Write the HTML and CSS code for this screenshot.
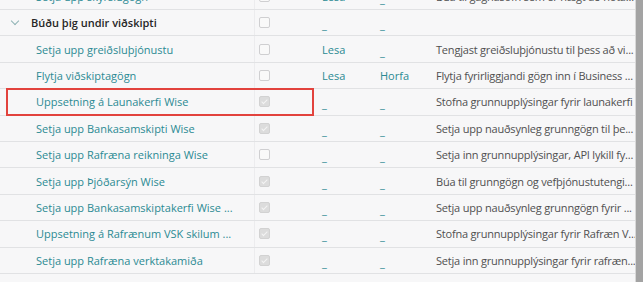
FILE: index.html
```html
<!DOCTYPE html>
<html lang="is">
<head>
  <meta charset="UTF-8" />
  <title>Uppsetning</title>
  <link rel="stylesheet" href="styles.css">
</head>
<body>
  <div class="page">
    <div class="list">
      <div class="rows">
        <div class="row">
          <div class="name child link">Setja upp skýrslugögn</div>
          <div class="chk"><span class="box"></span></div>
          <div class="col link word">Lesa</div>
          <div class="col link">_</div>
          <div class="desc">Búa til gagnasöfn sem er hægt að nota...</div>
        </div>
        <div class="row">
          <div class="name group"><span class="chev"></span>Búðu þig undir viðskipti</div>
          <div class="chk"><span class="box"></span></div>
          <div class="col link">_</div>
          <div class="col link">_</div>
          <div class="desc"></div>
        </div>
        <div class="row">
          <div class="name child link">Setja upp greiðsluþjónustu</div>
          <div class="chk"><span class="box"></span></div>
          <div class="col link word">Lesa</div>
          <div class="col link">_</div>
          <div class="desc">Tengjast greiðsluþjónustu til þess að vi...</div>
        </div>
        <div class="row">
          <div class="name child link">Flytja viðskiptagögn</div>
          <div class="chk"><span class="box"></span></div>
          <div class="col link word">Lesa</div>
          <div class="col link word">Horfa</div>
          <div class="desc">Flytja fyrirliggjandi gögn inn í Business ...</div>
        </div>
        <div class="row">
          <div class="name child link">Uppsetning á Launakerfi Wise</div>
          <div class="chk"><span class="box on"></span></div>
          <div class="col link">_</div>
          <div class="col link">_</div>
          <div class="desc">Stofna grunnupplýsingar fyrir launakerfi</div>
        </div>
        <div class="row">
          <div class="name child link">Setja upp Bankasamskipti Wise</div>
          <div class="chk"><span class="box on"></span></div>
          <div class="col link">_</div>
          <div class="col link">_</div>
          <div class="desc">Setja upp nauðsynleg grunngögn til þe...</div>
        </div>
        <div class="row">
          <div class="name child link">Setja upp Rafræna reikninga Wise</div>
          <div class="chk"><span class="box"></span></div>
          <div class="col link">_</div>
          <div class="col link">_</div>
          <div class="desc">Setja inn grunnupplýsingar, API lykill fy...</div>
        </div>
        <div class="row">
          <div class="name child link">Setja upp Þjóðarsýn Wise</div>
          <div class="chk"><span class="box on"></span></div>
          <div class="col link">_</div>
          <div class="col link">_</div>
          <div class="desc">Búa til grunngögn og vefþjónustutengi...</div>
        </div>
        <div class="row">
          <div class="name child link">Setja upp Bankasamskiptakerfi Wise ...</div>
          <div class="chk"><span class="box on"></span></div>
          <div class="col link">_</div>
          <div class="col link">_</div>
          <div class="desc">Setja upp nauðsynleg grunngögn fyrir ...</div>
        </div>
        <div class="row">
          <div class="name child link">Uppsetning á Rafrænum VSK skilum ...</div>
          <div class="chk"><span class="box on"></span></div>
          <div class="col link">_</div>
          <div class="col link">_</div>
          <div class="desc">Stofna grunnupplýsingar fyrir Rafræn V...</div>
        </div>
        <div class="row">
          <div class="name child link">Setja upp Rafræna verktakamiða</div>
          <div class="chk"><span class="box on"></span></div>
          <div class="col link">_</div>
          <div class="col link">_</div>
          <div class="desc">Setja inn grunnupplýsingar fyrir rafræn...</div>
        </div>
        <div class="mark"></div>
      </div>
    </div>
    <div class="scrollbar"></div>
  </div>
</body>
</html>
```

FILE: styles.css
```css
html, body {
  margin: 0;
  height: 100%;
  overflow: hidden;
  background-color: #f7f7f8;
}
body {
  font-family: "Open Sans", Arial, sans-serif;
  font-size: 11px;
  color: #505050;
}
.page {
  display: flex;
  height: 282px;
}
.list {
  flex: 1;
  overflow: hidden;
}
.rows {
  position: relative;
  margin-top: -16.4px;
}
.row {
  display: grid;
  grid-template-columns: 254px 62px 58px 56px 1fr;
  height: 26.4px;
  align-items: center;
  border-bottom: 1px solid #e1e2e4;
  box-sizing: border-box;
}
.name {
  white-space: nowrap;
  overflow: hidden;
}
.child {
  padding-left: 36px;
}
.group {
  display: flex;
  align-items: center;
  padding-left: 10px;
  font-weight: 600;
  color: #262626;
}
.chev {
  width: 5px;
  height: 5px;
  border-right: 1px solid #8fb3b5;
  border-bottom: 1px solid #8fb3b5;
  transform: rotate(45deg);
  margin: -4px 13px 0 2px;
}
.link {
  color: #2b8a93;
}
.chk {
  height: 100%;
  display: flex;
  align-items: center;
  padding-left: 4px;
  border-left: 1px solid #ececee;
}
.box {
  width: 9px;
  height: 9px;
  border: 1px solid #cfcfd1;
  border-radius: 2px;
  background: #f9f9f9;
  position: relative;
}
.box.on {
  background: #dcdcdc;
  border-color: #d2d2d2;
}
.box.on::after {
  content: "";
  position: absolute;
  left: 3px;
  top: 1px;
  width: 2px;
  height: 5px;
  border-right: 1px solid #f4f4f4;
  border-bottom: 1px solid #f4f4f4;
  transform: rotate(45deg);
}
.col {
  padding-left: 6px;
  padding-top: 4px;
}
.col.word {
  padding-top: 0;
}
.desc {
  white-space: nowrap;
  overflow: hidden;
  padding-left: 6px;
  letter-spacing: -0.2px;
}
.mark {
  position: absolute;
  left: 6px;
  top: 104.4px;
  width: 308px;
  height: 28px;
  border: 2px solid #e2433d;
  box-sizing: border-box;
}
.scrollbar {
  width: 7px;
  background: #a3a3a3;
  border-left: 1px solid #d8d8d8;
}
```
